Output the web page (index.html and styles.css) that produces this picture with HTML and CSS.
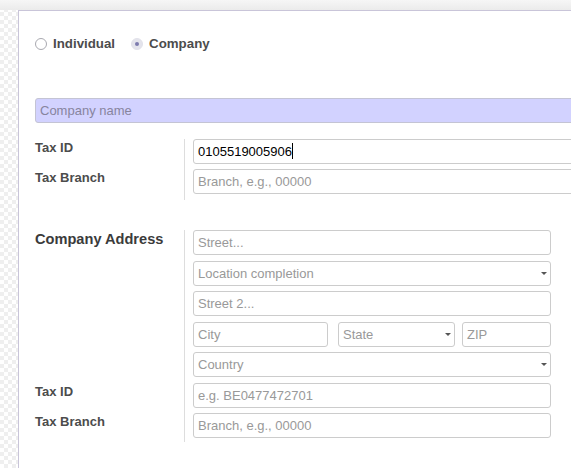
FILE: index.html
```html
<!DOCTYPE html>
<html>
<head>
<meta charset="utf-8">
<link rel="stylesheet" href="styles.css">
</head>
<body>
<div class="topbar"></div>
<div class="sheet">
  <div class="radios">
    <div class="radio"><span class="circle"></span>Individual</div>
    <div class="radio"><span class="circle checked"></span>Company</div>
  </div>
  <div class="field name ph">Company name</div>

  <div class="group group-tax">
    <div class="lbl">Tax ID</div>
    <div class="cell"><div class="field value">0105519005906<span class="cursor"></span></div></div>
    <div class="lbl">Tax Branch</div>
    <div class="cell last"><div class="field ph">Branch, e.g., 00000</div></div>
  </div>

  <div class="group group-addr">
    <div class="lbl big">Company Address</div>
    <div class="cell"><div class="field ph">Street...</div></div>
    <div class="lbl"></div>
    <div class="cell"><div class="field ph select">Location completion<span class="caret"></span></div></div>
    <div class="lbl"></div>
    <div class="cell"><div class="field ph">Street 2...</div></div>
    <div class="lbl"></div>
    <div class="cell">
      <div class="triple">
        <div class="field ph city">City</div>
        <div class="field ph select state">State<span class="caret"></span></div>
        <div class="field ph zip">ZIP</div>
      </div>
    </div>
    <div class="lbl"></div>
    <div class="cell"><div class="field ph select">Country<span class="caret"></span></div></div>
    <div class="lbl">Tax ID</div>
    <div class="cell"><div class="field ph">e.g. BE0477472701</div></div>
    <div class="lbl">Tax Branch</div>
    <div class="cell last"><div class="field ph">Branch, e.g., 00000</div></div>
  </div>
</div>
</body>
</html>
```

FILE: styles.css
```css
html, body {
  margin: 0;
  padding: 0;
}
body {
  width: 571px;
  height: 468px;
  overflow: hidden;
  font-family: "Liberation Sans", Arial, sans-serif;
  font-size: 13px;
  color: #4c4c4c;
  background-color: #ffffff;
  background-image:
    linear-gradient(45deg, #efefef 25%, transparent 25%, transparent 75%, #efefef 75%),
    linear-gradient(45deg, #efefef 25%, transparent 25%, transparent 75%, #efefef 75%);
  background-size: 8px 8px;
  background-position: 0 0, 4px 4px;
}
.topbar {
  height: 10px;
  background: linear-gradient(#f6f6f6, #ebebeb);
}
.sheet {
  margin-left: 18px;
  width: 553px;
  height: 458px;
  overflow: hidden;
  background: #ffffff;
  border-top: 1px solid #c9c5d9;
  border-left: 1px solid #c9c5d9;
  padding: 24px 0 0 16px;
  box-sizing: border-box;
}
.radios {
  display: flex;
  height: 18px;
  align-items: center;
  gap: 16px;
}
.radio {
  display: flex;
  align-items: center;
  font-weight: bold;
  font-size: 13.3px;
  line-height: 18px;
  color: #4c4c4c;
}
.circle {
  width: 12px;
  height: 12px;
  box-sizing: border-box;
  border-radius: 50%;
  border: 1px solid #a9a9b0;
  background: #fff;
  margin-right: 6px;
  display: flex;
  align-items: center;
  justify-content: center;
}
.circle.checked {
  border-color: #e2e2ea;
  background: #e4e4ec;
}
.circle.checked::after {
  content: "";
  width: 4px;
  height: 4px;
  border-radius: 50%;
  background: #7d7bae;
}
.field {
  box-sizing: border-box;
  height: 25px;
  line-height: 23px;
  border: 1px solid #cccccc;
  border-radius: 3px;
  padding: 0 4px;
  background: #fff;
  color: #000;
  white-space: nowrap;
  overflow: hidden;
  position: relative;
}
.field.ph {
  color: #999999;
}
.field.name {
  margin-top: 45px;
  width: 620px;
  background: #d2d2ff;
  color: #87849e;
  border-color: #c4c4d4;
}
.cursor {
  display: inline-block;
  width: 1px;
  height: 16px;
  background: #000;
  vertical-align: -3px;
}
.group {
  display: grid;
  grid-template-columns: 149px 1fr;
}
.group-tax {
  margin-top: 16px;
  width: 700px;
}
.group-addr {
  margin-top: 30px;
  grid-template-columns: 149px 367px;
}
.lbl {
  font-weight: bold;
  line-height: 18px;
  color: #4c4c4c;
}
.lbl.big {
  font-size: 14.6px;
  color: #3b3b3b;
}
.cell {
  border-left: 1px solid #dddddd;
  padding-left: 8px;
  padding-bottom: 5px;
}
.group-tax .cell.last {
  padding-bottom: 6px;
}
.group-addr .cell {
  padding-bottom: 5.5px;
}
.group-addr .cell.last {
  padding-bottom: 4px;
}
.triple {
  display: flex;
}
.city {
  width: 135px;
  margin-right: 10px;
}
.state {
  width: 117px;
  margin-right: 7px;
}
.zip {
  flex: 1;
}
.caret {
  position: absolute;
  right: 3px;
  top: 10px;
  width: 0;
  height: 0;
  border-left: 3px solid transparent;
  border-right: 3px solid transparent;
  border-top: 3px solid #555;
}
```
